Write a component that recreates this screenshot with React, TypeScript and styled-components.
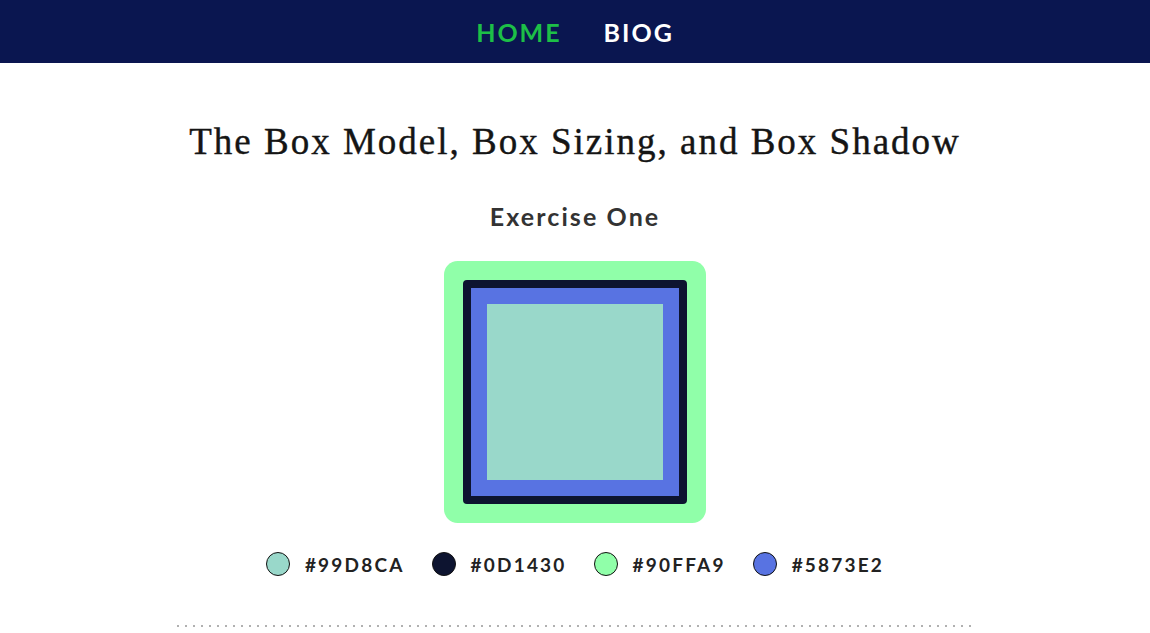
import React from 'react';
import styled, { createGlobalStyle } from 'styled-components';

const GlobalStyle = createGlobalStyle`
	body {
		margin: 0;
		background: #ffffff;
		font-family: Lato, 'Liberation Sans', sans-serif;
	}
`;

const NavBar = styled.nav`
	height: 63px;
	background: #0a1650;
	display: flex;
	justify-content: center;
	align-items: center;
	gap: 42px;
`;

const NavLink = styled.a<{ $active?: boolean }>`
	font-family: Lato, sans-serif;
	font-weight: 700;
	font-size: 25px;
	letter-spacing: 2px;
	color: ${({ $active }) => ($active ? '#1dbf47' : '#ffffff')};
	text-decoration: none;
	padding-top: 1px;
`;

const Main = styled.main`
	display: flex;
	flex-direction: column;
	align-items: center;
`;

const Title = styled.h1`
	margin: 55px 0 0;
	font-family: 'Liberation Serif', 'DejaVu Serif', serif;
	font-weight: 400;
	font-size: 37px;
	letter-spacing: 2px;
	color: #151515;
	line-height: 48px;
	-webkit-text-stroke: 0.4px #151515;
`;

const Subtitle = styled.h2`
	margin: 35px 0 0;
	font-family: Lato, sans-serif;
	font-weight: 700;
	font-size: 25px;
	letter-spacing: 2.1px;
	color: #333333;
	line-height: 30px;
`;

const BoxArea = styled.div`
	margin-top: 30px;
	padding: 19px;
`;

const Box = styled.div`
	width: 176px;
	height: 176px;
	padding: 16px;
	border: 8px solid #0d1430;
	border-radius: 4px;
	background: #5873e2;
	box-shadow: 0 0 0 19px #90ffa9;
	display: flex;
`;

const BoxContent = styled.div`
	flex: 1;
	background: #99d8ca;
`;

const Legend = styled.ul`
	list-style: none;
	margin: 29px 0 0;
	padding: 0;
	display: flex;
	gap: 27px;
`;

const LegendItem = styled.li`
	display: flex;
	align-items: center;
	gap: 15px;
`;

const Swatch = styled.span<{ $color: string }>`
	width: 22px;
	height: 22px;
	border-radius: 50%;
	border: 1.5px solid #111111;
	background: ${({ $color }) => $color};
`;

const Code = styled.span`
	font-family: Lato, sans-serif;
	font-weight: 700;
	font-size: 19px;
	letter-spacing: 2.2px;
	color: #222222;
`;

const Divider = styled.div`
	width: 796px;
	height: 2px;
	margin-top: 49px;
	background-image: repeating-linear-gradient(
		to right,
		#b0b0b0 0,
		#b0b0b0 2px,
		transparent 2px,
		transparent 8px
	);
`;

const colors = ['#99D8CA', '#0D1430', '#90FFA9', '#5873E2'];

const App: React.FC = () => (
	<>
		<GlobalStyle />
		<NavBar>
			<NavLink href="#" $active>
				HOME
			</NavLink>
			<NavLink href="#">BIOG</NavLink>
		</NavBar>
		<Main>
			<Title>The Box Model, Box Sizing, and Box Shadow</Title>
			<Subtitle>Exercise One</Subtitle>
			<BoxArea>
				<Box>
					<BoxContent />
				</Box>
			</BoxArea>
			<Legend>
				{colors.map((c) => (
					<LegendItem key={c}>
						<Swatch $color={c} />
						<Code>{c}</Code>
					</LegendItem>
				))}
			</Legend>
			<Divider />
		</Main>
	</>
);

export default App;
